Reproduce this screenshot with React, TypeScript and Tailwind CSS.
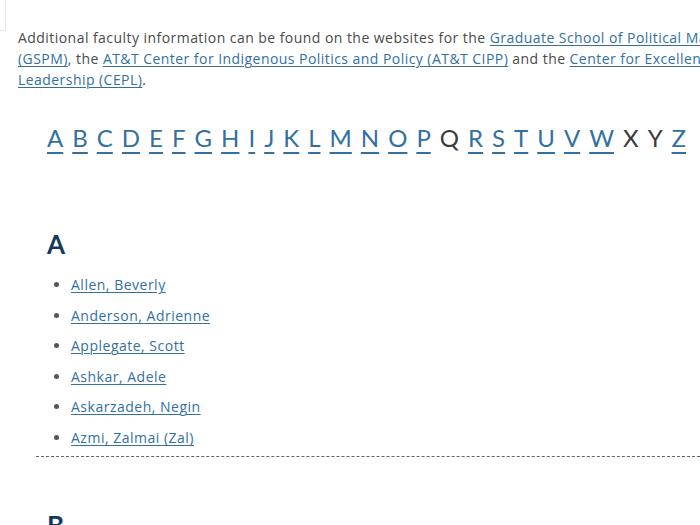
import React from "react";

const letters = "ABCDEFGHIJKLMNOPQRSTUVWXYZ".split("");
const inactive = new Set(["Q", "X", "Y"]);
const names = [
  "Allen, Beverly",
  "Anderson, Adrienne",
  "Applegate, Scott",
  "Ashkar, Adele",
  "Askarzadeh, Negin",
  "Azmi, Zalmai (Zal)",
];

const linkCls = "text-[#33709f] underline underline-offset-2 decoration-1";

export default function App() {
  return (
    <div
      className="relative w-[700px] h-[525px] overflow-hidden bg-white text-[#4a4a4a]"
      style={{ fontFamily: "Lato, 'Noto Sans', sans-serif" }}
    >
      <div className="absolute left-0 top-0 w-[6px] h-[31px] border-r border-b border-[#e6e6e6]" />
      <div
        className="pl-[18px] pt-[27px] text-[14px] leading-[21px] tracking-[0.45px] whitespace-nowrap"
        style={{ fontFamily: "'Open Sans', sans-serif" }}
      >
        <div>
          Additional faculty information can be found on the websites for the{" "}
          <a className={linkCls}>Graduate School of Political Management</a>
        </div>
        <div>
          <a className={linkCls}>(GSPM)</a>, the{" "}
          <a className={linkCls}>AT&amp;T Center for Indigenous Politics and Policy (AT&amp;T CIPP)</a> and the{" "}
          <a className={linkCls}>Center for Excellence in Public</a>
        </div>
        <div>
          <a className={linkCls}>Leadership (CEPL)</a>.
        </div>
      </div>

      <div className="pl-[47px] mt-[33px] flex gap-[9px] text-[24px] leading-[30px]">
        {letters.map((l) =>
          inactive.has(l) ? (
            <span key={l} className="text-[#3a3a3a]">{l}</span>
          ) : (
            <a key={l} className="text-[#33709f] underline decoration-2 underline-offset-[5px]">{l}</a>
          )
        )}
      </div>

      <div className="mt-[76px] pl-[47px]">
        <h2 className="text-[26px] leading-[30px] font-bold text-[#123a5e]">A</h2>
        <ul
          className="mt-[16px] pl-[24px] list-disc text-[14px] leading-[20px] tracking-[0.5px] marker:text-[#555]"
          style={{ fontFamily: "'Open Sans', sans-serif" }}
        >
          {names.map((n) => (
            <li key={n} className="mb-[10.6px]">
              <a className={linkCls}>{n}</a>
            </li>
          ))}
        </ul>
      </div>
      <div className="ml-[36px] mt-[-3px] border-t border-dashed border-[#666]" />
      <div className="pl-[47px] mt-[53px]">
        <h2 className="text-[26px] leading-[30px] font-bold text-[#123a5e]">B</h2>
      </div>
    </div>
  );
}
